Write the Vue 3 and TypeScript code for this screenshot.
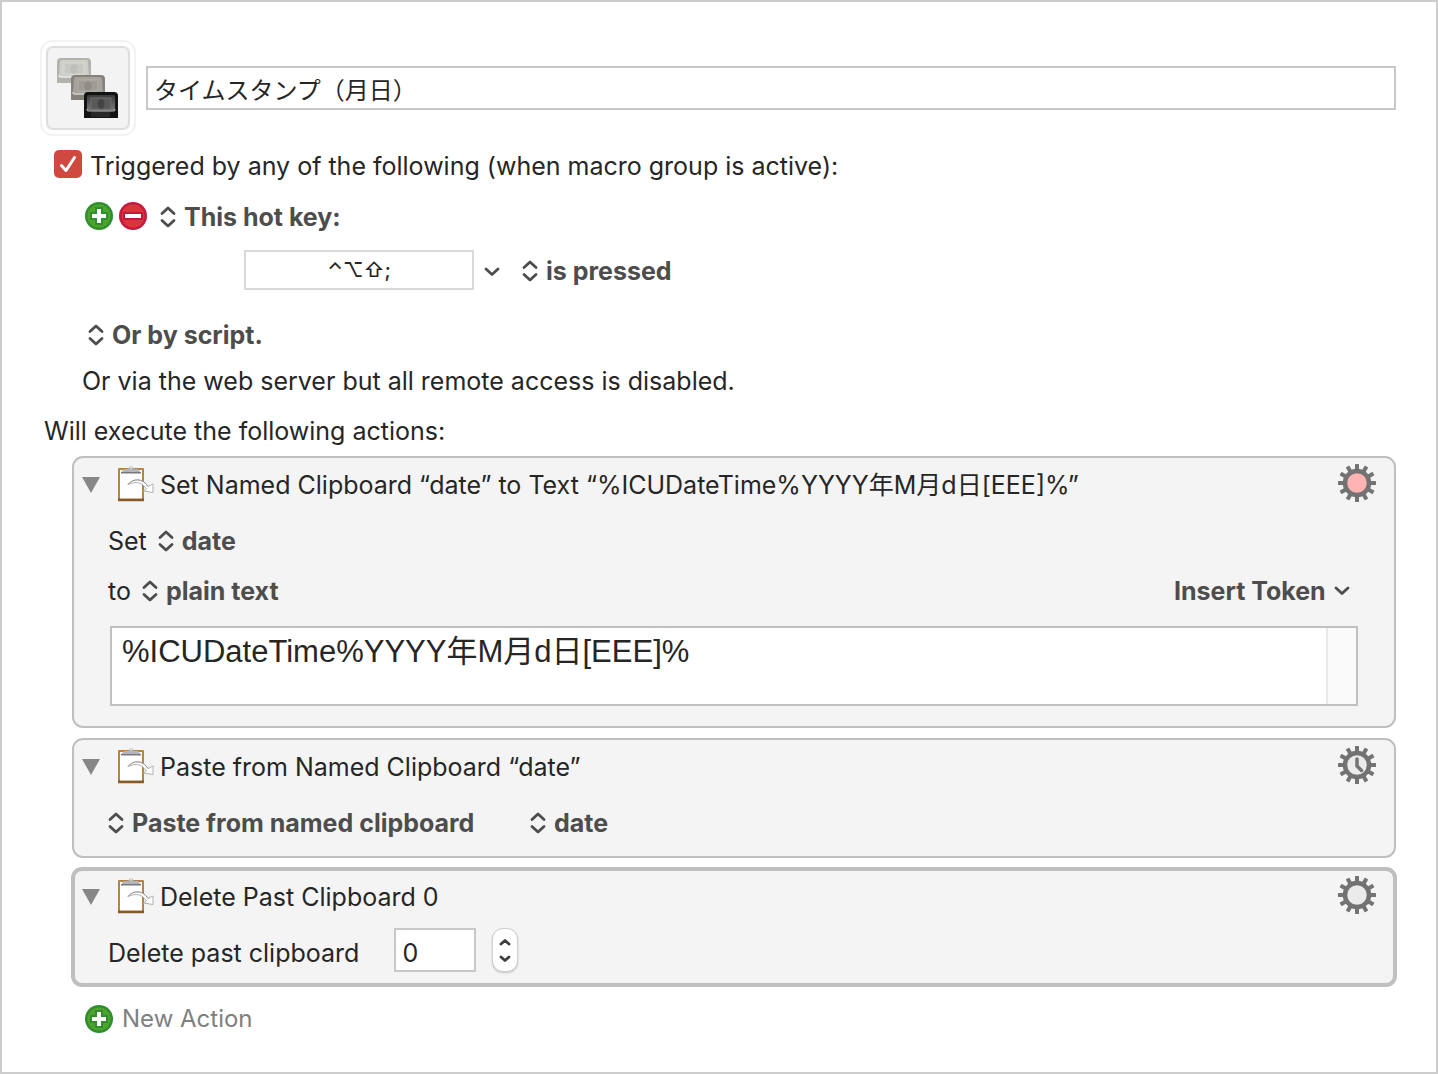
<script setup lang="ts">
import { ref } from 'vue'

const macroName = ref('タイムスタンプ（月日）')
const triggered = ref(true)
const hotKey = ref('⌃⌥⇧;')
const clipboardText = ref('%ICUDateTime%YYYY年M月d日[EEE]%')
const pastIndex = ref('0')
const teeth = Array.from({ length: 12 }, (_, i) => i * 30)
</script>

<template>
  <main class="editor">
    <svg class="defs" aria-hidden="true">
      <defs>
        <linearGradient id="screen" x1="0" y1="0" x2="0" y2="1">
          <stop offset="0" stop-color="#3c3c3c" />
          <stop offset="1" stop-color="#7c7c7c" />
        </linearGradient>
        <symbol id="updown" viewBox="0 0 16 22">
          <path d="M2 7.500 8 2l6 5.500M2 14.500 8 20l6-5.500" fill="none" stroke="#4d4d4d" stroke-width="2.800" stroke-linecap="round" stroke-linejoin="round" />
        </symbol>
        <symbol id="down" viewBox="0 0 16 10">
          <path d="M2 2l6 5.500L14 2" fill="none" stroke="#4d4d4d" stroke-width="2.800" stroke-linecap="round" stroke-linejoin="round" />
        </symbol>
        <symbol id="plus" viewBox="0 0 28 28">
          <circle cx="14" cy="14" r="14" fill="#2e8f2e" />
          <circle cx="14" cy="14" r="11.500" fill="#4fa32c" />
          <path d="M10 5h8v5h5v8h-5v5h-8v-5H5v-8h5z" fill="#2e8f2e" />
          <path d="M12 7h4v5h5v4h-5v5h-4v-5H7v-4h5z" fill="#fff" />
        </symbol>
        <symbol id="minus" viewBox="0 0 28 28">
          <circle cx="14" cy="14" r="14" fill="#c4183e" />
          <circle cx="14" cy="14" r="11.500" fill="#d9363c" />
          <path d="M4 10h20v8H4z" fill="#c4183e" />
          <path d="M6 12h16v4H6z" fill="#fff" />
        </symbol>
        <symbol id="clipboard" viewBox="0 0 38 38">
          <rect x="2" y="6" width="26" height="32" rx="1" fill="#000" opacity=".15" />
          <rect x="2" y="4" width="26" height="33" rx="1" fill="#b58347" />
          <path d="M2 34.500h26V37H2z" fill="#8a5a26" />
          <rect x="4" y="6" width="22" height="28.500" fill="#fff" />
          <path d="M5 8.500 8 5h3c1 0 2-.5 2-1.500a2.200 2.200 0 0 1 4 0C17 4.500 18 5 19 5h3l3 3.500z" fill="#b3b5b8" />
          <path d="M5 8h20v1.500H5z" fill="#77797c" />
          <circle cx="15" cy="3.500" r="1" fill="#eee" />
          <path d="M12 20.500C17 14 27 14 32 22.500l5-2.500v8.500l-9.500-1.500 3-2C26 18 20 17 12 20.500z" fill="#fff" stroke="#b0b0b0" stroke-width="1" stroke-linejoin="round" />
          <path d="M12 20.500C17 14 27 14 32 22.500" fill="none" stroke="#909090" stroke-width=".8" />
        </symbol>
        <symbol id="gear" viewBox="0 0 38 38">
          <rect v-for="a in teeth" :key="a" x="17" y="0" width="4" height="8" rx=".5" fill="#737373" :transform="`rotate(${a} 19 19)`" />
          <circle cx="19" cy="19" r="12" fill="currentColor" stroke="#737373" stroke-width="4.500" />
        </symbol>
      </defs>
    </svg>

    <header class="title-row">
      <button class="icon-well" type="button" aria-label="Macro icon">
        <svg width="80" height="80" viewBox="0 0 80 80">
          <g transform="translate(9 10)">
            <path d="M0 25V4Q0 0 4 0h26q4 0 4 4v21z" fill="#b3b3ab" />
            <path d="M2 19 3 4q0-2 2-2h24q2 0 2 2l1 15q-15 2-30 0z" fill="#cfcfca" />
            <path d="M2 17q0 2 2 2h26q2 0 2-2" fill="none" stroke="#e6e6e3" stroke-width="1.500" />
            <path d="M7 5h20v11H7z" fill="#c8c8c2" stroke="#d9d9d5" />
            <ellipse cx="17" cy="11" rx="3.500" ry="4.500" fill="#bebeb8" />
          </g>
          <g transform="translate(23 27)">
            <path d="M0 25V4Q0 0 4 0h26q4 0 4 4v21z" fill="#85827b" />
            <path d="M2 19 3 4q0-2 2-2h24q2 0 2 2l1 15q-15 2-30 0z" fill="#a5a39c" />
            <path d="M2 17q0 2 2 2h26q2 0 2-2" fill="none" stroke="#cfcdc8" stroke-width="1.500" />
            <path d="M7 5h20v11H7z" fill="#9e9c95" stroke="#b2b0a9" />
            <ellipse cx="17" cy="11" rx="3.500" ry="4.500" fill="#8f8c85" />
          </g>
          <g transform="translate(36 44)">
            <path d="M0 26V4Q0 0 4 0h26q4 0 4 4v22z" fill="#121313" />
            <path d="M3 19V5q0-2 2-2h24q2 0 2 2v14q-14 1-28 0z" fill="url(#screen)" />
            <path d="M3 17q0 2 2 2h24q2 0 2-2" fill="none" stroke="#989898" stroke-width="1.200" />
            <path d="M7 6h20v11H7z" fill="#595959" stroke="#6c6c6c" />
            <ellipse cx="17" cy="12" rx="3.500" ry="5" fill="#444" />
            <path d="M7 20h19v5H7z" fill="#282828" />
          </g>
        </svg>
      </button>
      <input v-model="macroName" class="name-field" type="text" aria-label="Macro name" />
    </header>

    <section class="triggers">
      <label class="row trigger-toggle">
        <span class="tick">
          <input v-model="triggered" type="checkbox" />
          <svg v-if="triggered" width="28" height="28" viewBox="0 0 28 28"><path d="M7.500 15.500 12 20.500 20.500 7.500" fill="none" stroke="#fff" stroke-width="3" stroke-linecap="round" stroke-linejoin="round" /></svg>
        </span>
        Triggered by any of the following (when macro group is active):
      </label>

      <div class="row trigger-kind">
        <button class="round" type="button" aria-label="Add trigger"><svg width="28" height="28"><use href="#plus" /></svg></button>
        <button class="round" type="button" aria-label="Remove trigger"><svg width="28" height="28"><use href="#minus" /></svg></button>
        <label class="popup"><svg width="16" height="22"><use href="#updown" /></svg><select aria-label="Trigger type"><option>This hot key:</option></select></label>
      </div>

      <div class="row hotkey">
        <input v-model="hotKey" class="key-field" type="text" aria-label="Hot key" />
        <button class="chevron" type="button" aria-label="Hot key options"><svg width="16" height="10"><use href="#down" /></svg></button>
        <label class="popup"><svg width="16" height="22"><use href="#updown" /></svg><select aria-label="Key event"><option>is pressed</option></select></label>
      </div>

      <div class="row script">
        <label class="popup"><svg width="16" height="22"><use href="#updown" /></svg><select aria-label="Script trigger"><option>Or by script.</option></select></label>
      </div>

      <p class="web">Or via the web server but all remote access is disabled.</p>
    </section>

    <p class="execute">Will execute the following actions:</p>

    <section class="actions">
      <article class="card">
        <div class="head">
          <button class="fold" type="button" aria-label="Collapse action"><svg width="18" height="16" viewBox="0 0 18 16"><path d="M0 0h18L9 16z" fill="#878787" /></svg></button>
          <svg class="clip" width="38" height="38"><use href="#clipboard" /></svg>
          <h2>Set Named Clipboard “date” to Text “%ICUDateTime%YYYY年M月d日[EEE]%”</h2>
          <button class="gear recording" type="button" aria-label="Action options"><svg width="38" height="38"><use href="#gear" /></svg></button>
        </div>
        <div class="row body-row">
          <span>Set</span>
          <label class="popup"><svg width="16" height="22"><use href="#updown" /></svg><select aria-label="Clipboard"><option>date</option></select></label>
        </div>
        <div class="row body-row format-row">
          <span>to</span>
          <label class="popup"><svg width="16" height="22"><use href="#updown" /></svg><select aria-label="Text format"><option>plain text</option></select></label>
          <label class="popup token"><select aria-label="Insert token"><option>Insert Token</option></select><svg width="16" height="10"><use href="#down" /></svg></label>
        </div>
        <div class="text-box">
          <textarea v-model="clipboardText" aria-label="Clipboard text" spellcheck="false"></textarea>
          <div class="track"></div>
        </div>
      </article>

      <article class="card paste">
        <div class="head">
          <button class="fold" type="button" aria-label="Collapse action"><svg width="18" height="16" viewBox="0 0 18 16"><path d="M0 0h18L9 16z" fill="#878787" /></svg></button>
          <svg class="clip" width="38" height="38"><use href="#clipboard" /></svg>
          <h2>Paste from Named Clipboard “date”</h2>
          <button class="gear" type="button" aria-label="Action options">
            <svg width="38" height="38" viewBox="0 0 38 38"><use href="#gear" /><path d="M19 13v7l4.500 4.500" fill="none" stroke="#737373" stroke-width="3.500" stroke-linecap="round" stroke-linejoin="round" /></svg>
          </button>
        </div>
        <div class="row body-row paste-row">
          <label class="popup"><svg width="16" height="22"><use href="#updown" /></svg><select aria-label="Paste mode"><option>Paste from named clipboard</option></select></label>
          <label class="popup"><svg width="16" height="22"><use href="#updown" /></svg><select aria-label="Named clipboard"><option>date</option></select></label>
        </div>
      </article>

      <article class="card selected">
        <div class="head">
          <button class="fold" type="button" aria-label="Collapse action"><svg width="18" height="16" viewBox="0 0 18 16"><path d="M0 0h18L9 16z" fill="#878787" /></svg></button>
          <svg class="clip" width="38" height="38"><use href="#clipboard" /></svg>
          <h2>Delete Past Clipboard 0</h2>
          <button class="gear" type="button" aria-label="Action options"><svg width="38" height="38"><use href="#gear" /></svg></button>
        </div>
        <div class="body-row delete-row">
          <label for="past">Delete past clipboard</label>
          <input id="past" v-model="pastIndex" class="number-field" type="text" />
          <div class="stepper">
            <button type="button" aria-label="Increase"><svg width="12" height="8" viewBox="0 0 12 8"><path d="M2 6l4-3.500L10 6" fill="none" stroke="#3c3c3c" stroke-width="2.800" stroke-linecap="round" stroke-linejoin="round" /></svg></button>
            <button type="button" aria-label="Decrease"><svg width="12" height="8" viewBox="0 0 12 8"><path d="M2 2l4 3.500L10 2" fill="none" stroke="#3c3c3c" stroke-width="2.800" stroke-linecap="round" stroke-linejoin="round" /></svg></button>
          </div>
        </div>
      </article>
    </section>

    <button class="new-action" type="button"><svg width="28" height="28"><use href="#plus" /></svg>New Action</button>
  </main>
</template>

<style>
body {
  background: #fff;
}
</style>

<style scoped>
.editor {
  box-sizing: border-box;
  min-height: 100vh;
  padding: 38px 40px 24px;
  border: 2px solid #ccc;
  background: #fff;
  color: #262626;
  font: 25px/32px Inter, "Noto Sans CJK JP", sans-serif;
}
.defs {
  position: absolute;
  width: 0;
  height: 0;
}
svg {
  display: block;
  flex: none;
}
button,
input,
select,
textarea {
  box-sizing: border-box;
  margin: 0;
  padding: 0;
  color: inherit;
  font: inherit;
  outline: none;
}
button {
  border: 0;
  background: none;
}
p,
h2 {
  margin: 0;
  font-size: inherit;
  font-weight: 400;
}
.row,
.title-row,
.popup {
  display: flex;
  align-items: center;
}
.title-row {
  gap: 10px;
  margin-left: -2px;
}
.icon-well {
  width: 96px;
  height: 96px;
  padding: 4px;
  border: 2px solid #f3f3f3;
  border-radius: 12px;
  display: grid;
}
.icon-well svg {
  border: 2px solid #dedede;
  border-radius: 7px;
  background: #f3f3f3;
}
.name-field {
  flex: 1;
  min-width: 0;
  height: 44px;
  padding: 0 6px;
  border: 2px solid #c8c8c8;
  background: #fff;
  font-size: 24px;
  line-height: 36px;
}
.trigger-toggle {
  gap: 8px;
  margin: 14px 0 0 12px;
}
.tick {
  position: relative;
  width: 28px;
  height: 28px;
  margin-bottom: 4px;
}
.tick input {
  display: block;
  width: 28px;
  height: 28px;
  border-radius: 5px;
  background: #d0493f;
  appearance: none;
}
.tick svg {
  position: absolute;
  inset: 0;
}
.popup {
  gap: 8px;
  color: #4d4d4d;
}
.popup select {
  height: 32px;
  border: 0;
  background: none;
  font-weight: 700;
  appearance: none;
}
.trigger-kind {
  gap: 6px;
  margin: 19px 0 0 43px;
}
.round {
  margin-bottom: 2px;
}
.trigger-kind .popup {
  margin-left: 7px;
}
.hotkey {
  margin: 17px 0 0 202px;
}
.key-field {
  width: 230px;
  height: 40px;
  border: 2px solid #d9d9d9;
  background: #fff;
  font-size: 20px;
  font-weight: 500;
  text-align: center;
}
.chevron {
  padding: 4px 10px 0;
}
.hotkey .popup {
  margin: 2px 0 0 12px;
}
.script {
  margin: 29px 0 0 46px;
}
.web {
  margin: 14px 0 0 40px;
}
.execute {
  margin: 18px 0 9px 2px;
}
.actions {
  display: flex;
  flex-direction: column;
  gap: 10px;
  margin-left: 30px;
}
.card {
  padding: 6px 36px 20px;
  border: 2px solid #bfbfbf;
  border-radius: 11px;
  background: #f4f4f4;
}
.paste {
  padding-bottom: 17px;
}
.selected {
  margin: -1px -1px 0;
  padding: 5px 35px 11px;
  border-width: 4px;
}
.head {
  display: flex;
  align-items: flex-end;
  margin: 0 -18px 23px -28px;
}
.fold {
  margin-bottom: 9px;
}
.clip {
  margin: 0 6px 0 16px;
}
h2 {
  flex: 1;
  line-height: 34px;
}
.gear {
  color: #ebebeb;
}
.recording {
  color: #ffb3b3;
}
.body-row {
  gap: 11px;
  margin-left: -2px;
}
.format-row {
  margin-top: 18px;
  margin-bottom: 19px;
}
.token {
  margin-left: auto;
  margin-right: 8px;
}
.text-box {
  display: flex;
  height: 80px;
  box-sizing: border-box;
  border: 2px solid #c0c0c0;
  background: #fff;
}
.text-box textarea {
  flex: 1;
  min-width: 0;
  padding: 6px 10px;
  border: 0;
  background: none;
  font: 31px/36px "Liberation Sans", "Noto Sans CJK JP", sans-serif;
  resize: none;
  overflow: hidden;
}
.track {
  box-sizing: border-box;
  width: 30px;
  border-left: 2px solid #e8e8e8;
  background: #fafafa;
}
.paste-row {
  gap: 55px;
}
.selected .head {
  margin-bottom: 14px;
}
.delete-row {
  display: flex;
  align-items: center;
  gap: 0;
}
.delete-row label {
  padding-top: 6px;
}
.number-field {
  width: 82px;
  height: 44px;
  margin: 0 16px 0 35px;
  padding: 6px 6px 0;
  border: 2px solid #c8c8c8;
  background: #fff;
}
.stepper {
  display: grid;
  width: 26px;
  height: 44px;
  box-sizing: border-box;
  padding: 4px 0;
  border: 1px solid #cfcfcf;
  border-radius: 11px;
  background: #fff;
  box-shadow: 0 1px 2px #0003;
}
.stepper button {
  display: grid;
  place-items: center;
}
.new-action {
  display: flex;
  align-items: center;
  gap: 9px;
  margin: 16px 0 0 43px;
  color: #808080;
  font-size: 24px;
}
</style>
